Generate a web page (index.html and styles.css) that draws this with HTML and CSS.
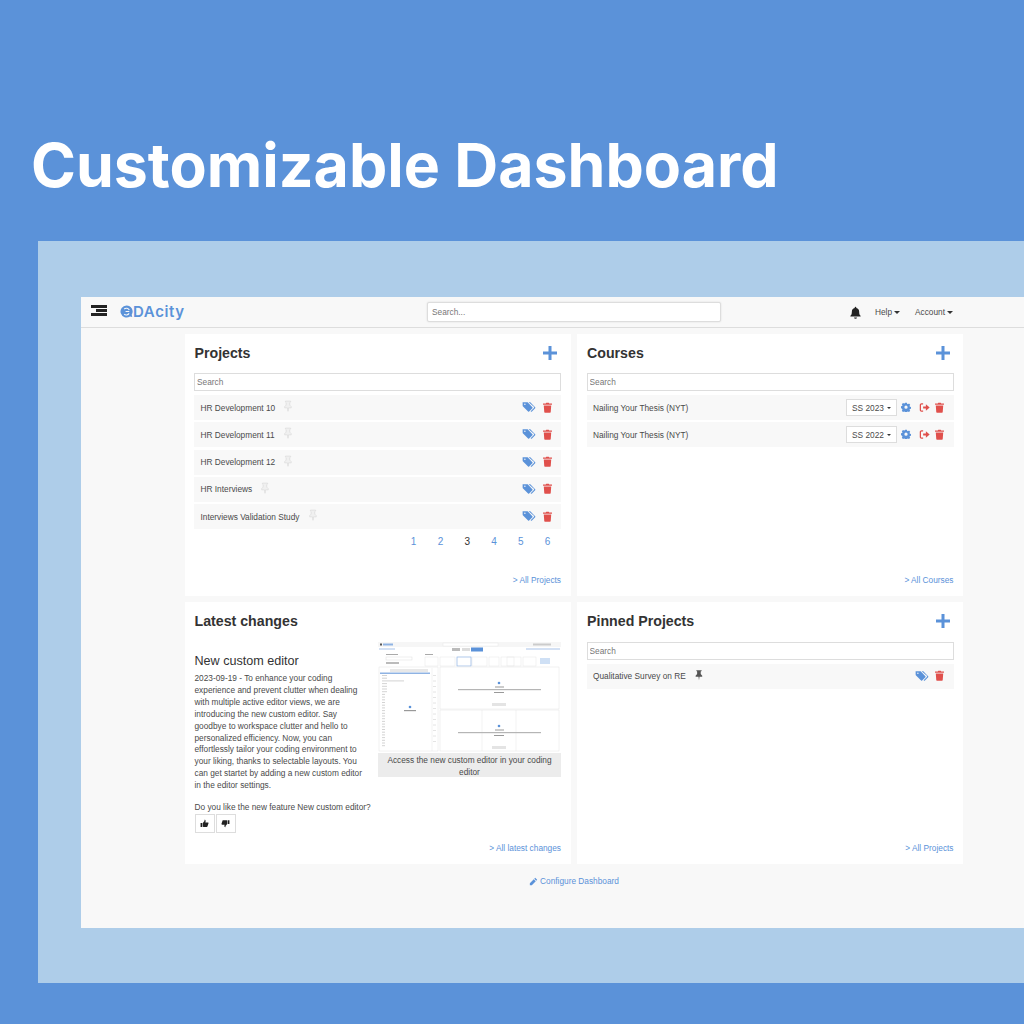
FILE: index.html
```html
<!DOCTYPE html>
<html lang="en">
<head>
    <meta charset="UTF-8">
    <title>Customizable Dashboard</title>
    <link rel="stylesheet" href="styles.css">
</head>
<body>
    <svg class="icon-defs" width="0" height="0">
        <symbol id="i-plus" viewBox="0 0 16 16"><path d="M6.500 1h3v5.500H15v3H9.500V15h-3V9.500H1v-3h5.500z"/></symbol>
        <symbol id="i-tags" viewBox="0 0 18 16"><path fill-rule="evenodd" d="M.5 1.500h6a1 1 0 0 1 .7.3l6.300 6.500a1 1 0 0 1 0 1.400l-4.300 4.300a1 1 0 0 1-1.400 0L1.400 7.600A2 2 0 0 1 .5 6zM3.500 3.300a1 1 0 1 0 0 2 1 1 0 0 0 0-2z"/><path d="M8.500 1.500h1.500a1 1 0 0 1 .7.3l6.500 6.500a1 1 0 0 1 0 1.400l-4.300 4.300a1 1 0 0 1-1.400 0l-.3-.3 4.300-4.300a1.200 1.200 0 0 0 0-1.700z"/></symbol>
        <symbol id="i-trash" viewBox="0 0 16 16"><path fill-rule="evenodd" d="M1.500 2.300h4l.7-1.300h3.600l.7 1.300h4v1.700h-13zM2.600 5h10.800l-.7 9.700a1 1 0 0 1-1 .9H4.300a1 1 0 0 1-1-.9z"/></symbol>
        <symbol id="i-pin" viewBox="0 0 16 16"><path d="M4.500 1.500h7v1.200l-1.200.7v3.400l2 2.100v1.500H8.700L8 15l-.7-4.600H3.500V8.900l2-2.100V3.400l-1-.7z"/></symbol>
        <symbol id="i-cog" viewBox="0 0 16 16"><path fill-rule="evenodd" d="M6.600 1h2.800l.4 1.900 1.300.6 1.700-1 1.900 2-1 1.600.5 1.300 1.800.5v2.800l-1.800.5-.5 1.300 1 1.600-1.900 2-1.700-1-1.300.5-.4 1.900H6.600l-.4-1.900-1.300-.5-1.700 1-1.900-2 1-1.600-.5-1.300L0 9.700V6.900l1.800-.5.500-1.300-1-1.600 1.900-2 1.700 1 1.300-.6zM8 5.600a2.600 2.600 0 1 0 0 5.200 2.600 2.600 0 0 0 0-5.200z"/></symbol>
        <symbol id="i-out" viewBox="0 0 16 16"><path d="M6 6.500h4V3.200L15.500 8 10 12.800V9.500H6z"/><path fill="none" stroke="currentColor" stroke-width="1.800" d="M6 2.700H3.500A1.500 1.500 0 0 0 2 4.200v7.600a1.500 1.500 0 0 0 1.500 1.500H6"/></symbol>
        <symbol id="i-up" viewBox="0 0 16 16"><path d="M1 7h3v7H1zM5 7l3-3.500V1.500c1.500 0 2.300 1.200 2 2.500L9.500 6H14c1 0 1.300 1 1 1.800l-1.800 5.400c-.2.500-.6.800-1.200.8H6l-1-.8z"/></symbol>
        <symbol id="i-down" viewBox="0 0 16 16"><path transform="rotate(180 8 8)" d="M1 7h3v7H1zM5 7l3-3.500V1.500c1.500 0 2.300 1.200 2 2.500L9.500 6H14c1 0 1.300 1 1 1.800l-1.800 5.400c-.2.500-.6.800-1.200.8H6l-1-.8z"/></symbol>
        <symbol id="i-bell" viewBox="0 0 16 16"><path d="M8 1a1 1 0 0 1 1 1v.6c2.200.4 3.500 2.200 3.500 4.400 0 3 .7 4 1.800 5v1H1.700v-1c1.100-1 1.800-2 1.800-5 0-2.200 1.300-4 3.500-4.400V2a1 1 0 0 1 1-1zM6.200 14h3.600a1.800 1.800 0 0 1-3.600 0z"/></symbol>
        <symbol id="i-pencil" viewBox="0 0 16 16"><path d="M11 1.500l3.500 3.500-1.600 1.600-3.500-3.500zM8.500 4l3.500 3.500L5 14.500H1.500V11z"/></symbol>
    </svg>

    <header class="hero">
        <h1>Customizable Dashboard</h1>
    </header>

    <div class="panel">
        <div class="app">
            <!-- Top navigation -->
            <nav class="navbar">
                <div class="burger"><span></span><span class="short"></span><span></span></div>
                <div class="logo">
                    <svg class="logo-q" viewBox="0 0 14 14"><path d="M7 .5a6.500 6.500 0 1 1-3.800 11.800L.8 13l.6-2.600A6.500 6.500 0 0 1 7 .5z" fill="#5b92d9" transform="matrix(-1 0 0 1 14 0)"/><path d="M4.500 4.300a3.600 3.600 0 0 1 5.500 1.200M10 7H6M9.800 9a3.600 3.600 0 0 1-5.300 1" fill="none" stroke="#f8f8f8" stroke-width="1.200"/></svg>
                    <span>DAcity</span>
                </div>
                <div class="nav-search"><input class="nav-input" placeholder="Search..."></div>
                <div class="nav-right">
                    <svg class="nav-bell"><use href="#i-bell"/></svg>
                    <span class="nav-link">Help<i class="caret"></i></span>
                    <span class="nav-link">Account<i class="caret"></i></span>
                </div>
            </nav>

            <div class="dashboard-grid">
                <!-- Projects -->
                <section class="card">
                    <div class="card-head">
                        <h2>Projects</h2>
                        <svg class="add"><use href="#i-plus"/></svg>
                    </div>
                    <input class="list-search" placeholder="Search">
                    <ul class="rows">
                        <li class="row"><span>HR Development 10</span><svg class="pin off"><use href="#i-pin"/></svg><span class="spacer"></span><svg class="tag"><use href="#i-tags"/></svg><svg class="trash"><use href="#i-trash"/></svg></li>
                        <li class="row"><span>HR Development 11</span><svg class="pin off"><use href="#i-pin"/></svg><span class="spacer"></span><svg class="tag"><use href="#i-tags"/></svg><svg class="trash"><use href="#i-trash"/></svg></li>
                        <li class="row"><span>HR Development 12</span><svg class="pin off"><use href="#i-pin"/></svg><span class="spacer"></span><svg class="tag"><use href="#i-tags"/></svg><svg class="trash"><use href="#i-trash"/></svg></li>
                        <li class="row"><span>HR Interviews</span><svg class="pin off"><use href="#i-pin"/></svg><span class="spacer"></span><svg class="tag"><use href="#i-tags"/></svg><svg class="trash"><use href="#i-trash"/></svg></li>
                        <li class="row"><span>Interviews Validation Study</span><svg class="pin off"><use href="#i-pin"/></svg><span class="spacer"></span><svg class="tag"><use href="#i-tags"/></svg><svg class="trash"><use href="#i-trash"/></svg></li>
                    </ul>
                    <div class="pager">
                        <a>1</a><a>2</a><a class="current">3</a><a>4</a><a>5</a><a>6</a>
                    </div>
                    <a class="all-link">&gt; All Projects</a>
                </section>

                <!-- Courses -->
                <section class="card">
                    <div class="card-head">
                        <h2>Courses</h2>
                        <svg class="add"><use href="#i-plus"/></svg>
                    </div>
                    <input class="list-search" placeholder="Search">
                    <ul class="rows">
                        <li class="row"><span>Nailing Your Thesis (NYT)</span><span class="spacer"></span><span class="term">SS 2023<i class="caret"></i></span><svg class="cog"><use href="#i-cog"/></svg><svg class="leave"><use href="#i-out"/></svg><svg class="trash"><use href="#i-trash"/></svg></li>
                        <li class="row"><span>Nailing Your Thesis (NYT)</span><span class="spacer"></span><span class="term">SS 2022<i class="caret"></i></span><svg class="cog"><use href="#i-cog"/></svg><svg class="leave"><use href="#i-out"/></svg><svg class="trash"><use href="#i-trash"/></svg></li>
                    </ul>
                    <a class="all-link">&gt; All Courses</a>
                </section>

                <!-- Latest changes -->
                <section class="card">
                    <div class="card-head">
                        <h2>Latest changes</h2>
                    </div>
                    <div class="news">
                        <div class="news-text">
                            <h3>New custom editor</h3>
                            <p>2023-09-19 - To enhance your coding experience and prevent clutter when dealing with multiple active editor views, we are introducing the new custom editor. Say goodbye to workspace clutter and hello to personalized efficiency. Now, you can effortlessly tailor your coding environment to your liking, thanks to selectable layouts. You can get startet by adding a new custom editor in the editor settings.</p>
                        </div>
                        <figure class="news-figure">
                            <svg class="shot" viewBox="0 0 183 111">
                                <rect width="183" height="111" fill="#fff"/>
                                <rect width="183" height="5" fill="#f6f6f6"/>
                                <rect x="5" y="1.500" width="10" height="2" fill="#8fb3e3"/>
                                <rect x="2" y="1.500" width="2" height="2" fill="#555"/>
                                <rect x="65" y="1" width="55" height="3" fill="#fff" stroke="#e8e8e8" stroke-width=".5"/>
                                <rect x="155" y="1.500" width="18" height="2" fill="#ccc"/>
                                <rect x="1" y="6.500" width="16" height="1" fill="#a9c4ea"/>
                                <rect x="74" y="6" width="8" height="3" fill="#bbb"/>
                                <rect x="84" y="6" width="8" height="3" fill="#ddd"/>
                                <rect x="93" y="5.500" width="12" height="4" fill="#5b92d9"/>
                                <rect x="148" y="6.500" width="34" height="1" fill="#a9c4ea"/>
                                <rect x="8" y="12" width="12" height="1" fill="#aaa"/>
                                <rect x="8" y="15" width="26" height="3" fill="none" stroke="#ddd" stroke-width=".5"/>
                                <rect x="8" y="20" width="13" height="2" fill="#bbb"/>
                                <rect x="47" y="12" width="8" height="1" fill="#aaa"/>
                                <g fill="none" stroke="#e6e6e6" stroke-width=".5">
                                    <rect x="47" y="15" width="13" height="9"/><rect x="62" y="15" width="15" height="9"/>
                                    <rect x="94" y="15" width="15" height="9"/><rect x="111" y="15" width="10" height="9"/>
                                    <rect x="123" y="15" width="13" height="9"/><rect x="129" y="15" width="14" height="9"/>
                                    <rect x="145" y="15" width="13" height="9"/>
                                </g>
                                <rect x="79" y="15" width="14" height="9" fill="none" stroke="#8fb3e3" stroke-width=".7"/>
                                <rect x="162" y="16" width="10" height="6" fill="#cfe0f5"/>
                                <g fill="none" stroke="#e4e4e4" stroke-width=".5">
                                    <rect x="1" y="25" width="59" height="84"/>
                                    <rect x="62" y="25" width="119" height="42"/>
                                    <rect x="62" y="68" width="119" height="41"/>
                                    <path d="M104 68v41M138 68v41M54 26v83"/>
                                </g>
                                <rect x="12" y="27" width="38" height="3" fill="#e8e8e8"/>
                                <rect x="2" y="30.500" width="50" height="1.500" fill="#8fb3e3"/>
                                <path d="M4 33.500h5M4 36.200h5M4 38.900h22M4 41.600h5M4 44.300h5M4 47h5M4 49.700h5M4 52.400h3M4 55.100h3M4 57.800h3M4 60.500h3M4 63.200h3M4 65.900h3M4 68.600h3M4 71.300h3M4 74h3M4 76.700h3M4 79.400h3M4 82.100h3M4 84.800h3M4 87.500h3M4 90.200h3M4 92.900h3M4 95.600h3M4 98.300h3M4 101h3M4 103.700h3" stroke="#c8c8c8" stroke-width=".8"/>
                                <path d="M55 33.500h3M55 39h3M55 44.500h3M55 50h3M55 55.500h3M55 61h3M55 66.500h3M55 72h3M55 77.500h3M55 83h3M55 88.500h3M55 94h3M55 99.500h3" stroke="#ddd" stroke-width=".8"/>
                                <circle cx="32" cy="65" r="1.300" fill="#5b92d9"/>
                                <rect x="26" y="68" width="12" height="1.200" fill="#999"/>
                                <circle cx="121" cy="41" r="1.300" fill="#5b92d9"/>
                                <rect x="117" y="44.500" width="9" height="1" fill="#999"/>
                                <rect x="80" y="47" width="83" height="1.200" fill="#b5b5b5"/>
                                <rect x="116" y="50" width="10" height="1" fill="#999"/>
                                <rect x="114" y="61" width="14" height="3" fill="#e4e4e4"/>
                                <circle cx="121" cy="84" r="1.300" fill="#5b92d9"/>
                                <rect x="117" y="87.500" width="9" height="1" fill="#999"/>
                                <rect x="80" y="90" width="83" height="1.200" fill="#b5b5b5"/>
                                <rect x="116" y="93" width="10" height="1" fill="#999"/>
                                <rect x="114" y="104" width="14" height="3" fill="#e4e4e4"/>
                            </svg>
                            <figcaption>Access the new custom editor in your coding editor</figcaption>
                        </figure>
                    </div>
                    <p class="feedback-q">Do you like the new feature New custom editor?</p>
                    <div class="thumbs">
                        <button class="thumb"><svg><use href="#i-up"/></svg></button>
                        <button class="thumb"><svg><use href="#i-down"/></svg></button>
                    </div>
                    <a class="all-link">&gt; All latest changes</a>
                </section>

                <!-- Pinned projects -->
                <section class="card">
                    <div class="card-head">
                        <h2>Pinned Projects</h2>
                        <svg class="add"><use href="#i-plus"/></svg>
                    </div>
                    <input class="list-search" placeholder="Search">
                    <ul class="rows">
                        <li class="row"><span>Qualitative Survey on RE</span><svg class="pin on"><use href="#i-pin"/></svg><span class="spacer"></span><svg class="tag"><use href="#i-tags"/></svg><svg class="trash"><use href="#i-trash"/></svg></li>
                    </ul>
                    <a class="all-link">&gt; All Projects</a>
                </section>
            </div>

            <a class="configure"><svg><use href="#i-pencil"/></svg>Configure Dashboard</a>
        </div>
    </div>
</body>
</html>
```

FILE: styles.css
```css
body {
    margin: 0;
    height: 1024px;
    overflow: hidden;
    background-color: #5b92d9;
    font-family: 'Liberation Sans', Arial, sans-serif;
    color: #333;
}

.icon-defs {
    position: absolute;
}

.hero {
    height: 241px;
    box-sizing: border-box;
    padding: 130px 0 0 31px;
}

.hero h1 {
    margin: 0;
    font-family: Inter, sans-serif;
    font-size: 60.800px;
    line-height: 70px;
    font-weight: 700;
    color: #fff;
}

.panel {
    margin-left: 38px;
    height: 742px;
    box-sizing: border-box;
    padding: 56px 0 0 43px;
    background-color: #aecde9;
}

.app {
    height: 631px;
    background-color: #f8f8f8;
}

.navbar {
    height: 31px;
    box-sizing: border-box;
    border-bottom: 1px solid #ddd;
    display: flex;
    align-items: center;
    padding: 0 71px 0 10px;
    font-size: 8.300px;
}

.burger {
    width: 16px;
    display: flex;
    flex-direction: column;
    align-items: flex-end;
    gap: 1px;
    margin-top: -3px;
}

.burger span {
    display: block;
    width: 16px;
    height: 3px;
    background: #222;
}

.burger .short {
    width: 11px;
}

.logo {
    display: flex;
    align-items: center;
    margin: -2px 0 0 13px;
    color: #5b92d9;
    font-family: Inter, sans-serif;
    font-weight: 600;
    font-size: 15px;
    letter-spacing: 0.6px;
}

.logo-q {
    width: 13px;
    height: 13px;
}

.nav-search {
    position: absolute;
    left: 427px;
}

.nav-input {
    display: block;
    width: 294px;
    height: 20px;
    box-sizing: border-box;
    padding: 0 4px;
    border: 1px solid #ddd;
    border-radius: 2px;
    font-family: inherit;
    font-size: 8.300px;
    box-shadow: 0 0 2px rgba(0, 0, 0, 0.12);
}

.nav-right {
    margin-left: auto;
    display: flex;
    align-items: center;
    gap: 14px;
    color: #4a4a4a;
}

.nav-right .nav-link + .nav-link {
    margin-left: 1px;
}

.nav-right .caret {
    border-width: 3px 3px 0;
}

.nav-bell {
    width: 13px;
    height: 13px;
    margin-right: -1.500px;
    fill: #222;
}

.caret {
    display: inline-block;
    margin-left: 2px;
    vertical-align: middle;
    border-top: 2.500px solid #333;
    border-left: 2.500px solid transparent;
    border-right: 2.500px solid transparent;
}

.dashboard-grid {
    display: grid;
    grid-template-columns: 386px 386px;
    grid-template-rows: 262px 262px;
    gap: 6px 6.500px;
    padding: 6px 0 0 103.500px;
}

.card {
    background: #fff;
    padding: 0 9.500px;
    display: flex;
    flex-direction: column;
    position: relative;
}

.card:nth-child(n+3) {
    padding-top: 0.700px;
}

.card-head {
    height: 39px;
    box-sizing: border-box;
    padding-bottom: 2px;
    display: flex;
    align-items: center;
    justify-content: space-between;
}

.card-head h2 {
    margin: 0;
    padding-left: 0.500px;
    font-size: 14.200px;
    font-weight: 700;
    color: #333;
}

.add {
    width: 16px;
    height: 16px;
    margin-right: 3px;
    fill: #5b92d9;
}

.list-search {
    display: block;
    width: 100%;
    height: 18px;
    box-sizing: border-box;
    padding: 0 2px;
    border: 1px solid #ddd;
    font-family: inherit;
    font-size: 8.300px;
    flex-shrink: 0;
}

.list-search::placeholder,
.nav-input::placeholder {
    color: #777;
}

.rows {
    list-style: none;
    margin: 4px 0 0;
    padding: 0;
}

.row {
    height: 25px;
    margin-bottom: 2.300px;
    padding: 0 8.500px 0 6.500px;
    display: flex;
    align-items: center;
    background: #f8f8f8;
    font-size: 8.300px;
    color: #4a4a4a;
}

.spacer {
    flex: 1;
}

.pin {
    width: 12px;
    height: 12px;
    margin: -3px 0 0 7px;
}

.pin.off {
    fill: #f0f0f0;
    stroke: #dcdcdc;
    stroke-width: 1;
}

.pin.on {
    fill: #555;
    margin-top: -2px;
}

.tag {
    width: 14px;
    height: 12px;
    margin-top: -1px;
    fill: #5b92d9;
}

.trash {
    width: 11px;
    height: 11px;
    margin: -1px 0 0 5.500px;
    fill: #e0504c;
}

.term {
    width: 51px;
    height: 17px;
    box-sizing: border-box;
    border: 1px solid #ddd;
    background: #fff;
    display: flex;
    align-items: center;
    justify-content: center;
    gap: 1px;
}

.cog {
    width: 10px;
    height: 10px;
    margin: -1px 0 0 4px;
    fill: #5b92d9;
}

.leave {
    width: 11px;
    height: 11px;
    margin: -1px 0 0 8px;
    color: #e0504c;
    fill: #e0504c;
}

.row .leave + .trash {
    margin-left: 4px;
}

.pager {
    display: flex;
    justify-content: flex-end;
    margin-top: 1px;
    font-size: 10px;
    line-height: 20px;
    color: #5b92d9;
}

.pager a {
    width: 26.800px;
    text-align: center;
}

.pager .current {
    color: #333;
}

.all-link {
    position: absolute;
    right: 9.500px;
    bottom: 11px;
    font-size: 8.300px;
    color: #5b92d9;
}

.news {
    display: flex;
    justify-content: space-between;
    margin-top: 0.300px;
}

.news-text {
    width: 178px;
    padding-left: 0.500px;
}

.news-text h3 {
    margin: 11px 0 4px;
    font-size: 12.600px;
    line-height: 16px;
    font-weight: 400;
    color: #333;
}

.news-text p {
    margin: 0;
    width: 168px;
    font-size: 8.300px;
    line-height: 11.900px;
    color: #4a4a4a;
}

.news-figure {
    margin: 0;
    width: 183px;
}

.shot {
    display: block;
    width: 183px;
    height: 111px;
    filter: blur(0.4px);
}

.news-figure figcaption {
    background: #ececec;
    padding: 1px 4px;
    height: 24px;
    box-sizing: border-box;
    font-size: 8.300px;
    line-height: 12px;
    text-align: center;
    color: #4a4a4a;
}

.feedback-q {
    margin: 0;
    position: absolute;
    top: 200px;
    left: 10px;
    font-size: 8.300px;
    line-height: 11px;
    color: #4a4a4a;
}

.thumbs {
    position: absolute;
    top: 212px;
    left: 10px;
    display: flex;
    gap: 0.500px;
}

.thumb {
    width: 20.500px;
    height: 19px;
    padding: 0;
    border: 1px solid #ddd;
    background: #fff;
    display: flex;
    align-items: center;
    justify-content: center;
}

.thumb svg {
    width: 9px;
    height: 9px;
    fill: #222;
}

.configure {
    display: flex;
    justify-content: center;
    align-items: center;
    gap: 2px;
    margin: 11px 0 0 -7px;
    width: 1000px;
    font-size: 8.300px;
    line-height: 12px;
    color: #5b92d9;
}

.configure svg {
    width: 9px;
    height: 9px;
    fill: #5b92d9;
}
```
